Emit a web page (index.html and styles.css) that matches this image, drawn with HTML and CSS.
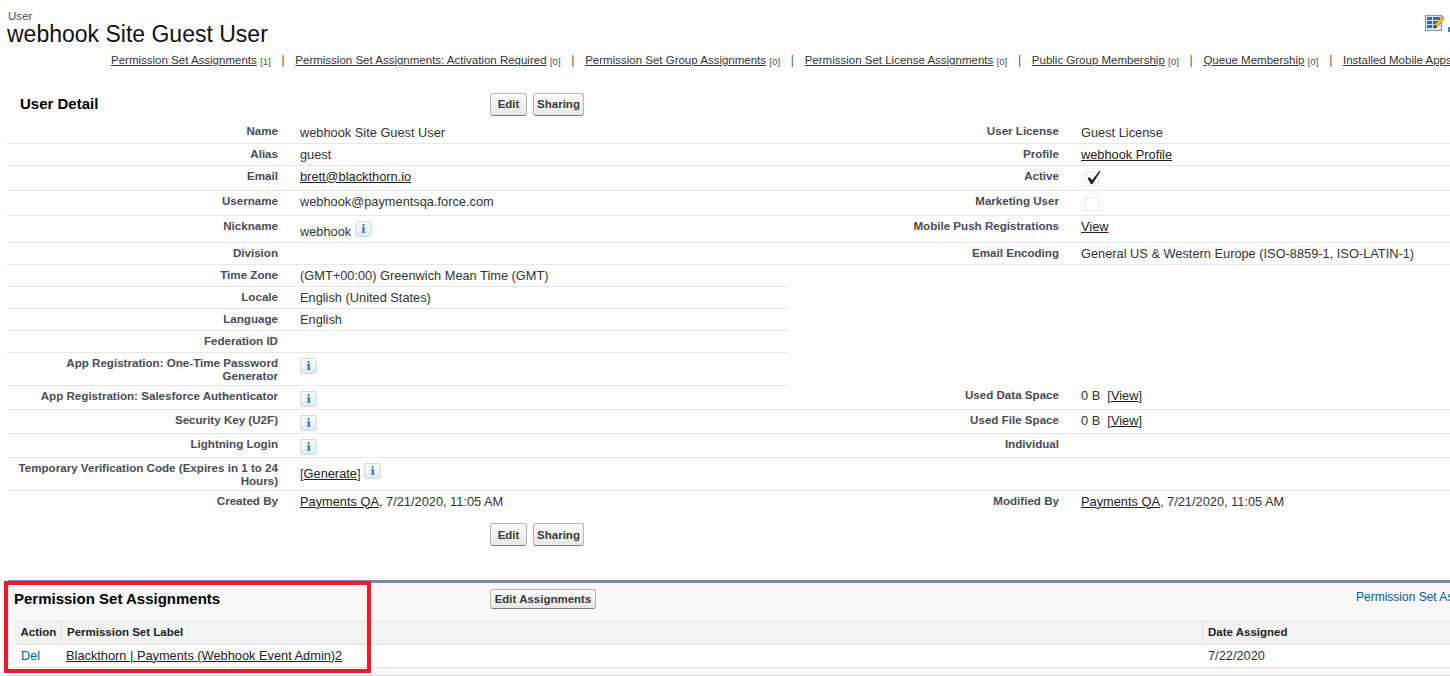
FILE: index.html
```html
<!DOCTYPE html>
<html lang="en">
<head>
<meta charset="utf-8">
<title>User: webhook Site Guest User</title>
<link rel="stylesheet" href="styles.css">
</head>
<body>
<div class="page">
  <header class="page-head">
    <div class="titles">
      <div class="entity">User</div>
      <h1 class="title">webhook Site Guest User</h1>
    </div>
    <div class="help-icon">
      <svg width="20" height="18" viewBox="0 0 20 18" aria-hidden="true">
        <rect x="0.5" y="1.5" width="16" height="15" fill="#dfe6ee" stroke="#8a949e"/>
        <rect x="2" y="3" width="5" height="3" fill="#1f6fd0"/><rect x="8" y="3" width="7" height="3" fill="#1f6fd0"/>
        <rect x="2" y="7" width="5" height="3" fill="#1f6fd0"/><rect x="8" y="7" width="7" height="3" fill="#1f6fd0"/>
        <rect x="2" y="11" width="5" height="3" fill="#1f6fd0"/><rect x="8" y="11" width="4" height="3" fill="#1f6fd0"/>
        <path d="M9 14 L10 10.500 L16.500 3 L19 5.500 L12 13 Z" fill="#f5c21b" stroke="#8d6a10" stroke-width="0.6"/>
        <path d="M16.500 3 L17.800 1.400 L19.600 3.400 L19 5.500 Z" fill="#d79ac4"/>
        <path d="M9 14 L10 10.500 L12 13 Z" fill="#333"/>
      </svg>
      <span class="help-mark"></span>
    </div>
  </header>

  <nav class="related">
    <span class="rel-item"><a href="#">Permission Set Assignments</a> <span class="count">[1]</span></span>
    <span class="rel-sep">|</span>
    <span class="rel-item"><a href="#">Permission Set Assignments: Activation Required</a> <span class="count">[0]</span></span>
    <span class="rel-sep">|</span>
    <span class="rel-item"><a href="#">Permission Set Group Assignments</a> <span class="count">[0]</span></span>
    <span class="rel-sep">|</span>
    <span class="rel-item"><a href="#">Permission Set License Assignments</a> <span class="count">[0]</span></span>
    <span class="rel-sep">|</span>
    <span class="rel-item"><a href="#">Public Group Membership</a> <span class="count">[0]</span></span>
    <span class="rel-sep">|</span>
    <span class="rel-item"><a href="#">Queue Membership</a> <span class="count">[0]</span></span>
    <span class="rel-sep">|</span>
    <span class="rel-item"><a href="#">Installed Mobile Apps</a></span>
  </nav>

  <section class="detail">
    <div class="detail-head">
      <h2 class="detail-title">User Detail</h2>
      <div class="btns"><button class="btn btn-edit">Edit</button><button class="btn btn-share">Sharing</button></div>
    </div>
    <table class="dt">
      <colgroup><col class="c-l1"><col class="c-d1"><col class="c-l2"><col class="c-d2"></colgroup>
      <tbody>
        <tr class="h22 first"><th>Name</th><td>webhook Site Guest User</td><th>User License</th><td>Guest License</td></tr>
        <tr class="h22"><th>Alias</th><td>guest</td><th>Profile</th><td><a href="#">webhook Profile</a></td></tr>
        <tr class="h25"><th>Email</th><td><a href="#">brett@blackthorn.io</a></td><th>Active</th><td><span class="chk"><svg width="16" height="15" viewBox="0 0 16 15" aria-hidden="true"><path d="M1.500 8.500 L3.500 7 L6 10 L13.500 0.800 L14.500 1.500 L6.500 14 L5 14 Z" fill="#222"/></svg></span></td></tr>
        <tr class="h25"><th>Username</th><td>webhook@paymentsqa.force.com</td><th>Marketing User</th><td><span class="chk"></span></td></tr>
        <tr class="h27"><th>Nickname</th><td class="low">webhook <span class="info">i</span></td><th>Mobile Push Registrations</th><td><a href="#">View</a></td></tr>
        <tr class="h22"><th>Division</th><td></td><th>Email Encoding</th><td>General US &amp; Western Europe (ISO-8859-1, ISO-LATIN-1)</td></tr>
        <tr class="h22 half"><th>Time Zone</th><td>(GMT+00:00) Greenwich Mean Time (GMT)</td><th></th><td></td></tr>
        <tr class="h22 half"><th>Locale</th><td>English (United States)</td><th></th><td></td></tr>
        <tr class="h22 half"><th>Language</th><td>English</td><th></th><td></td></tr>
        <tr class="h22 half"><th>Federation ID</th><td></td><th></th><td></td></tr>
        <tr class="h33 half"><th>App Registration: One-Time Password<br>Generator</th><td class="ic"><span class="info">i</span></td><th></th><td></td></tr>
        <tr class="h24"><th>App Registration: Salesforce Authenticator</th><td class="ic"><span class="info">i</span></td><th>Used Data Space</th><td>0 B&nbsp; [<a href="#">View</a>]</td></tr>
        <tr class="h24"><th>Security Key (U2F)</th><td class="ic"><span class="info">i</span></td><th>Used File Space</th><td>0 B&nbsp; [<a href="#">View</a>]</td></tr>
        <tr class="h24"><th>Lightning Login</th><td class="ic"><span class="info">i</span></td><th>Individual</th><td></td></tr>
        <tr class="h33"><th>Temporary Verification Code (Expires in 1 to 24<br>Hours)</th><td class="low">[<a href="#">Generate</a>] <span class="info">i</span></td><th></th><td></td></tr>
        <tr class="h22 last"><th>Created By</th><td><a href="#">Payments QA</a>, 7/21/2020, 11:05 AM</td><th>Modified By</th><td><a href="#">Payments QA</a>, 7/21/2020, 11:05 AM</td></tr>
      </tbody>
    </table>
    <div class="detail-foot">
      <div class="btns"><button class="btn btn-edit">Edit</button><button class="btn btn-share">Sharing</button></div>
    </div>
  </section>

  <section class="panel">
    <div class="panel-head">
      <h3 class="panel-title">Permission Set Assignments</h3>
      <button class="btn btn-sm">Edit Assignments</button>
      <a class="panel-help" href="#">Permission Set Assignments Help</a>
    </div>
    <table class="list">
      <colgroup><col class="c-act"><col class="c-label"><col class="c-date"></colgroup>
      <thead><tr><th>Action</th><th>Permission Set Label</th><th>Date Assigned</th></tr></thead>
      <tbody><tr><td><a class="blue" href="#">Del</a></td><td><a href="#">Blackthorn | Payments (Webhook Event Admin)2</a></td><td class="date">7/22/2020</td></tr></tbody>
    </table>
  </section>

  <div class="highlight"></div>
</div>
</body>
</html>
```

FILE: styles.css
```css
html, body { margin: 0; padding: 0; height: 100%; overflow: hidden; background: #fff; }
* { box-sizing: border-box; }
.page {
  position: relative;
  width: 1450px;
  height: 676px;
  overflow: hidden;
  font-family: "Liberation Sans", Arial, sans-serif;
  font-size: 12.800px;
  color: #333;
}
a { color: #222; text-decoration: underline; }

.page-head { display: flex; justify-content: space-between; height: 48px; padding: 9px 0 0 7px; }
.entity { font-size: 11.600px; line-height: 14px; color: #4a4a56; padding-left: 1px; }
.title { margin: -2px 0 0; font-size: 23px; font-weight: 400; line-height: 26px; color: #111; }
.help-icon { display: flex; width: 25px; padding-top: 5px; flex: none; }
.help-icon svg { flex: none; }
.help-mark { width: 2px; height: 5px; margin: 13px 0 0 3px; background: #3a85c6; flex: none; }

.related { display: flex; align-items: baseline; height: 24px; padding: 3px 0 0 111px; white-space: nowrap; font-size: 11.500px; line-height: 18px; color: #555; }
.related a { color: #333; }
.count { font-size: 9.800px; color: #555; vertical-align: -1px; }
.rel-sep { width: 24.500px; flex: none; text-align: center; color: #555; font-size: 12px; }

.detail { width: 1450px; }
.detail-head { display: flex; align-items: center; height: 49px; padding: 15px 0 0 20px; }
.detail-title { width: 470px; margin: 0 0 2px; font-size: 15px; font-weight: 700; color: #000; flex: none; }
.btns { display: flex; gap: 6px; }
.btn {
  height: 23px;
  padding: 0;
  font-family: inherit;
  font-size: 11.500px;
  font-weight: 700;
  color: #3a3a3a;
  white-space: nowrap;
  background: linear-gradient(#fcfcfc, #e6e6e6);
  border: 1px solid #b5b5b5;
  border-bottom-color: #7f7f7f;
  border-radius: 3px;
  flex: none;
}
.btn-edit { width: 37px; }
.btn-share { width: 51px; }
.dt { width: 1443px; margin-left: 7px; border-collapse: collapse; table-layout: fixed; }
.c-l1 { width: 275px; }
.c-d1 { width: 507px; }
.c-l2 { width: 274px; }
.c-d2 { width: 387px; }
.dt th, .dt td { vertical-align: top; padding: 3px 0 0; line-height: 16px; border-bottom: 1px solid #e8e8e8; }
.dt th { padding: 3px 4px 0 0; text-align: right; font-size: 11.600px; font-weight: 700; color: #4a4a56; line-height: 13px; }
.dt td { padding-left: 18px; color: #333; white-space: nowrap; }
.dt .first td { padding-top: 4px; }
.dt .last th, .dt .last td { border-bottom: 0; }
.half th:nth-child(3), .half td:nth-child(4) { border-bottom: 0; }
.h22 { height: 22px; }
.h24 { height: 24px; }
.h25 { height: 25px; }
.h27 { height: 27px; }
.h33 { height: 33px; }
.dt td.low { padding-top: 8px; }
.dt td.ic { padding-top: 5px; }
.info {
  display: inline-block;
  width: 17px;
  height: 16px;
  position: relative;
  vertical-align: top;
  border: 1px solid #d4dadc;
  border-radius: 3px;
  background: linear-gradient(#fbfdfe, #dfe9ee);
  color: #1668c4;
  font-family: "Liberation Serif", serif;
  font-size: 13px;
  font-weight: 700;
  line-height: 14px;
  text-align: center;
}
.low .info { top: -3px; }
.chk { display: block; position: relative; width: 14px; height: 14px; margin: 3px 0 0 4px; border: 1px dotted #dcdcdc; }
.chk svg { position: absolute; left: 0; top: -3px; }
.detail-foot { height: 68px; padding: 11px 0 0 490px; }

.panel { width: 1450px; margin: 0 0 0 8px; height: 96px; background: #f8f8f8; border-top: 3px solid #7a86a3; border-left: 1px solid #e4e4e4; border-bottom: 1px solid #dcdcdc; }
.panel-head { display: flex; height: 38px; padding: 5px 0 0 5px; }
.panel-title { width: 476px; margin: 0; padding-top: 2px; font-size: 15px; font-weight: 700; color: #000; line-height: 18px; flex: none; }
.btn-sm { height: 20px; width: 106px; margin-top: 1px; }
.panel-help { margin-left: 760px; padding-top: 2px; color: #015ba7; text-decoration: none; font-size: 12px; white-space: nowrap; flex: none; }
.list { width: 1435px; margin-left: 6px; border-collapse: collapse; table-layout: fixed; background: #fff; }
.c-act { width: 46px; }
.c-label { width: 1141px; }
.list th { height: 23px; padding: 0 6px 2px 5.500px; text-align: left; font-size: 11.500px; font-weight: 700; color: #222; background: #f2f3f3; border-top: 1px solid #e0e3e5; border-bottom: 1px solid #e0e3e5; border-right: 1px solid #e0e3e5; }
.list th:last-child { border-right: 0; }
.list td { height: 23px; padding: 0 5px 2px; color: #333; border-bottom: 1px solid #e3e3e3; }
.list td.date { padding-left: 6px; }
.blue { color: #015ba7; text-decoration: none; padding-left: 1px; }

.highlight { position: absolute; left: 4px; top: 581px; width: 367px; height: 92px; border: 4px solid #ed1c24; }
```
